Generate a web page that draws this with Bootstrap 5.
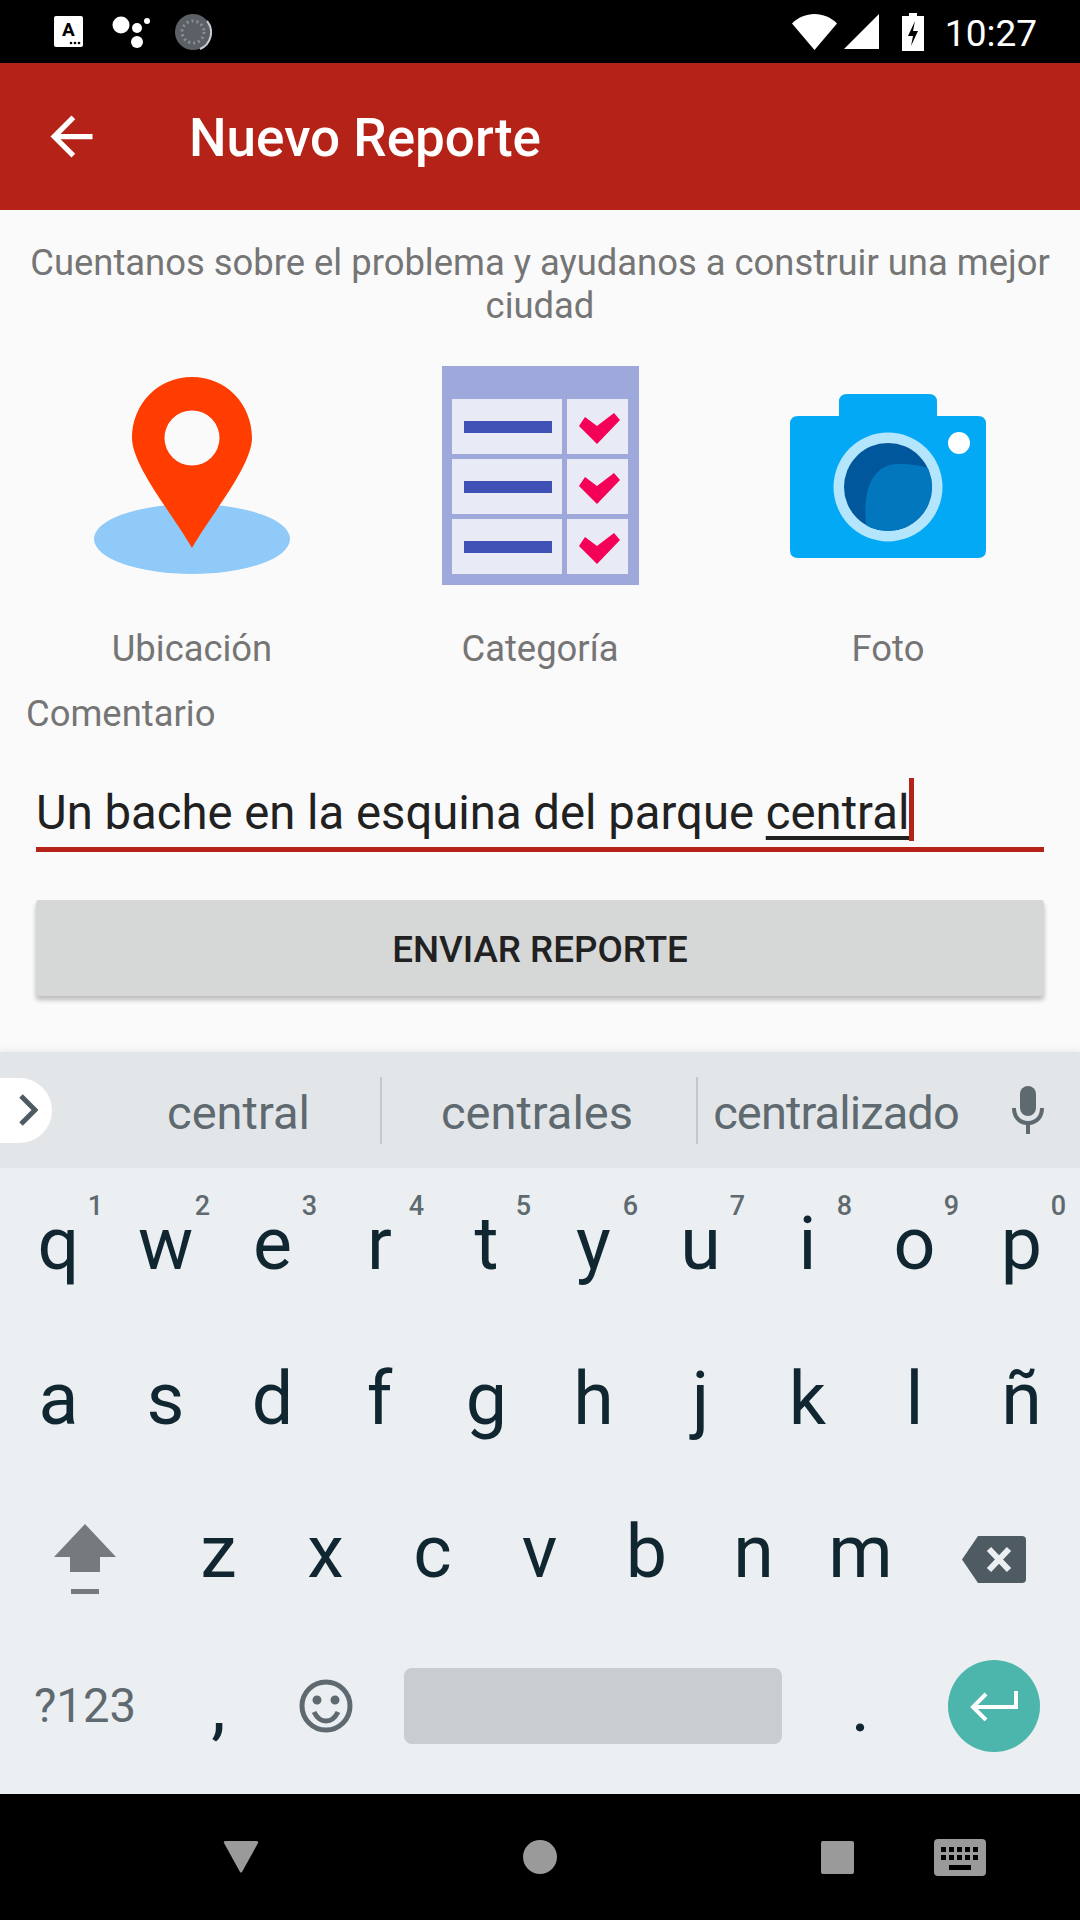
<!DOCTYPE html>
<html lang="es">
<head>
  <meta charset="UTF-8" />
  <meta name="viewport" content="width=device-width, initial-scale=1" />
  <title>Nuevo Reporte</title>
  <link href="https://cdn.jsdelivr.net/npm/bootstrap@5.3.3/dist/css/bootstrap.min.css" rel="stylesheet" />
  <style>
    body { width: 1080px; height: 1920px; overflow: hidden; background: #fafafa; font-family: Roboto, "Liberation Sans", sans-serif; }
    svg { display: block; flex-shrink: 0; }

    .status-bar { height: 63px; background: #000; color: #fff; padding: 0 43px 0 54px; }
    .status-time { font-size: 37px; line-height: 1; margin-left: 21px; padding-top: 3px; }
    .app-bar { height: 147px; background: #b52217; color: #fff; padding-left: 40px; }
    .app-title { font-size: 53px; font-weight: 500; margin: 4px 0 0 86px; line-height: 1; }

    .report-body { height: 842px; background: #fafafa; padding: 0 36px; color: #757575; }
    .report-intro { font-size: 36.400px; line-height: 43px; text-align: center; padding-top: 31px; margin: 0 -18px 0; }
    .report-grid { margin: 0 -18px; }
    .report-icons { margin-top: 39px; height: 220px; }
    .report-label { font-size: 36.400px; line-height: 43px; margin-top: 41px; }
    .comment-label { font-size: 36.400px; line-height: 43px; margin: 22px 0 0 -10px; }
    .comment-box { height: 88px; margin-top: 28.500px; border-bottom: 5px solid #b52217; color: #212121; font-size: 47.250px; line-height: 98px; white-space: nowrap; }
    .comment-word { text-decoration: underline; text-decoration-thickness: 4px; text-underline-offset: 7px; }
    .comment-caret { display: inline-block; width: 5px; height: 63px; background: #b52217; vertical-align: -12.500px; }
    .send-btn { width: 100%; height: 96px; margin-top: 48px; padding-top: 10px; background: #d6d7d7; border: 0; border-radius: 3px; color: #212121; font-size: 36.750px; font-weight: 500; box-shadow: 0 4px 5px rgba(0,0,0,.25); }

    .suggest-strip { height: 116px; background: #e3e6e9; color: #5f6a70; font-size: 47px; box-shadow: 0 -2px 6px rgba(0,0,0,.06); }
    .suggest-tab { width: 52px; height: 65px; background: #fff; border-radius: 0 33px 33px 0; }
    .suggest-word { text-align: center; line-height: 65px; padding-top: 2px; }
    .suggest-word span { position: relative; top: 1px; }
    .suggest-word:nth-child(1) { width: 298px; padding-left: 15px; }
    .suggest-word:nth-child(2) { width: 316px; padding-right: 4px; border-left: 2px solid #c4c8ca; }
    .suggest-word:nth-child(3) { width: 278px; border-left: 2px solid #c4c8ca; letter-spacing: -.9px; }
    .suggest-list { margin-left: 30px; }
    .suggest-mic { margin-left: 36px; }

    .keyboard { height: 626px; background: #eceff1; color: #102732; }
    .kb-row { height: 156.500px; padding: 0 5px; }
    .kb-row:nth-child(1) .kb-key { line-height: 153px; }
    .kb-row:nth-child(3) .kb-key { line-height: 143px; }
    .kb-row:nth-child(4) { padding-bottom: 20px; }
    .kb-row:nth-child(4) .kb-key { line-height: 137px; }
    .kb-key { position: relative; flex: 0 0 107px; text-align: center; font-size: 73.500px; line-height: 148px; }
    .kb-hint { position: absolute; top: 25px; right: 9px; font-size: 27px; line-height: 1; color: #5f6a70; font-weight: 500; }
    .kb-wide { flex: 0 0 160px; }
    .kb-row:nth-child(4) .kb-sym { font-size: 47.250px; color: #5f6a70; line-height: 136px; }
    .kb-space { flex: 0 0 428px; }
    .kb-bar { width: 378px; height: 76px; background: #c8cdd0; border-radius: 8px; }
    .kb-enter { width: 92px; height: 92px; background: #4db6ac; border-radius: 50%; }
    .nav-bar { height: 126px; background: #000; }
  </style>
</head>
<body>
<div class="d-flex flex-column">

  <!-- Status bar -->
  <div class="status-bar d-flex align-items-center">
    <svg width="29" height="31" viewBox="0 0 29 31"><rect width="29" height="31" rx="2" fill="#fff"/><text x="14.500" y="20" font-family="Roboto" font-weight="700" font-size="19" text-anchor="middle" fill="#000">A</text><circle cx="17" cy="27" r="1.300" fill="#000"/><circle cx="21" cy="27" r="1.300" fill="#000"/><circle cx="25" cy="27" r="1.300" fill="#000"/></svg>
    <svg style="margin-left:29px" width="38" height="36" viewBox="0 0 38 36"><circle cx="9" cy="11" r="8.500" fill="#fff"/><circle cx="25" cy="14" r="5" fill="#fff"/><circle cx="25" cy="28" r="6" fill="#fff"/><circle cx="35" cy="7" r="3" fill="#fff"/></svg>
    <svg style="margin-left:24px" width="38" height="38" viewBox="0 0 38 38"><circle cx="19" cy="19" r="18" fill="#5b6066"/><circle cx="19" cy="19" r="11" fill="none" stroke="#8b8f94" stroke-width="3" stroke-dasharray="2 3"/><path d="M33 8a18 18 0 0 1-7 28" fill="none" stroke="#c8ccd0" stroke-width="2"/></svg>
    <div class="flex-grow-1"></div>
    <svg width="45" height="36" viewBox="0 0 45 36"><path d="M22.500 36L0 9.500C6 3.500 14 0 22.500 0S39 3.500 45 9.500z" fill="#fff"/></svg>
    <svg style="margin-left:7px" width="35" height="35" viewBox="0 0 35 35"><path d="M35 0v35H0z" fill="#fff"/></svg>
    <svg style="margin-left:23px" width="22" height="38" viewBox="0 0 22 38"><path d="M7 0h8v3h7v35H0V3h7z" fill="#fff"/><path d="M13 8l-7 15h5l-2 10 7-15h-5z" fill="#000"/></svg>
    <div class="status-time">10:27</div>
  </div>

  <!-- App bar -->
  <div class="app-bar d-flex align-items-center">
    <svg width="63" height="63" viewBox="0 0 24 24" fill="#fff"><path d="M20 11H7.830l5.590-5.590L12 4l-8 8 8 8 1.410-1.410L7.830 13H20v-2z"/></svg>
    <h1 class="app-title">Nuevo Reporte</h1>
  </div>

  <!-- Form -->
  <div class="report-body">
    <p class="report-intro">Cuentanos sobre el problema y ayudanos a construir una mejor ciudad</p>

    <div class="row gx-0 report-grid report-icons">
      <div class="col-4 d-flex justify-content-center">
        <svg width="196" height="220" viewBox="0 0 196 220">
          <ellipse cx="98" cy="173" rx="98" ry="35" fill="#90caf9"/>
          <path fill-rule="evenodd" fill="#ff3d00" d="M98 11C64 11 38 38 38 72C38 100 80 150 98 182C116 150 158 100 158 72C158 38 132 11 98 11ZM98 44.500a27.500 27.500 0 1 1 0 55a27.500 27.500 0 1 1 0-55Z"/>
        </svg>
      </div>
      <div class="col-4 d-flex justify-content-center">
        <svg width="197" height="220" viewBox="0 0 197 220">
          <rect width="197" height="219" fill="#9fa8da"/>
          <g id="checkRow">
            <rect x="10" y="33" width="110" height="55" fill="#e8eaf6"/>
            <rect x="125" y="33" width="61" height="55" fill="#e8eaf6"/>
            <rect x="22" y="55" width="88" height="12" fill="#3f51b5"/>
            <path d="M137 60l6-9 12 9 17-13 6 7-23 24z" fill="#f50057"/>
          </g>
          <use href="#checkRow" y="60"/>
          <use href="#checkRow" y="120"/>
        </svg>
      </div>
      <div class="col-4 d-flex justify-content-center">
        <svg width="196" height="220" viewBox="0 0 196 220">
          <defs><clipPath id="lensClip"><circle cx="98" cy="121" r="44"/></clipPath></defs>
          <path fill="#03a9f4" d="M49 50V36q0-8 8-8h82q8 0 8 8v14h41q8 0 8 8v126q0 8-8 8H8q-8 0-8-8V58q0-8 8-8z"/>
          <circle cx="98" cy="121" r="54.500" fill="#b3e5fc"/>
          <circle cx="98" cy="121" r="44" fill="#01579b"/>
          <path clip-path="url(#lensClip)" fill="#0277bd" d="M78 170C70 130 80 98 108 98C122 98 135 100 145 105V170Z"/>
          <circle cx="169" cy="77" r="11" fill="#fff"/>
        </svg>
      </div>
    </div>

    <div class="row gx-0 report-grid text-center">
      <div class="col-4 report-label">Ubicación</div>
      <div class="col-4 report-label">Categoría</div>
      <div class="col-4 report-label">Foto</div>
    </div>

    <div class="comment-label">Comentario</div>
    <div class="comment-box">Un bache en la esquina del parque <span class="comment-word">central</span><span class="comment-caret"></span></div>
    <button type="button" class="btn send-btn">ENVIAR REPORTE</button>
  </div>

  <!-- Suggestions -->
  <div class="suggest-strip d-flex align-items-center">
    <div class="suggest-tab d-flex align-items-center">
      <svg style="margin-left:18px" width="20" height="32" viewBox="0 0 20 32"><path d="M3 2l14 14L3 30" fill="none" stroke="#4f5b62" stroke-width="5"/></svg>
    </div>
    <div class="suggest-list d-flex">
      <div class="suggest-word"><span>central</span></div>
      <div class="suggest-word"><span>centrales</span></div>
      <div class="suggest-word"><span>centralizado</span></div>
    </div>
    <svg class="suggest-mic" width="36" height="48" viewBox="0 0 36 48" fill="#5f6a70"><rect x="10" y="0" width="16" height="30" rx="8"/><path d="M2 22h4c0 8 5 13 12 13s12-5 12-13h4c0 10-6 16-14 17v9h-4v-9C8 38 2 32 2 22z"/></svg>
  </div>

  <!-- Keyboard -->
  <div class="keyboard">
    <div class="kb-row d-flex">
      <div class="kb-key">q<span class="kb-hint">1</span></div>
      <div class="kb-key">w<span class="kb-hint">2</span></div>
      <div class="kb-key">e<span class="kb-hint">3</span></div>
      <div class="kb-key">r<span class="kb-hint">4</span></div>
      <div class="kb-key">t<span class="kb-hint">5</span></div>
      <div class="kb-key">y<span class="kb-hint">6</span></div>
      <div class="kb-key">u<span class="kb-hint">7</span></div>
      <div class="kb-key">i<span class="kb-hint">8</span></div>
      <div class="kb-key">o<span class="kb-hint">9</span></div>
      <div class="kb-key">p<span class="kb-hint">0</span></div>
    </div>
    <div class="kb-row d-flex">
      <div class="kb-key">a</div><div class="kb-key">s</div><div class="kb-key">d</div><div class="kb-key">f</div><div class="kb-key">g</div>
      <div class="kb-key">h</div><div class="kb-key">j</div><div class="kb-key">k</div><div class="kb-key">l</div><div class="kb-key">ñ</div>
    </div>
    <div class="kb-row d-flex">
      <div class="kb-key kb-wide d-flex align-items-center justify-content-center">
        <svg width="62" height="70" viewBox="0 0 62 70" fill="#757a7d"><path d="M31 0l31 33H46v15H16V33H0z"/><rect x="17" y="65" width="28" height="5"/></svg>
      </div>
      <div class="kb-key">z</div><div class="kb-key">x</div><div class="kb-key">c</div><div class="kb-key">v</div><div class="kb-key">b</div><div class="kb-key">n</div><div class="kb-key">m</div>
      <div class="kb-key kb-wide d-flex align-items-center justify-content-center">
        <svg width="64" height="47" viewBox="0 0 64 47"><path d="M16 0h44q4 0 4 4v39q0 4-4 4H16L0 23.500z" fill="#4f5b62"/><path d="M27 13l20 21M47 13L27 34" stroke="#eceff1" stroke-width="6"/></svg>
      </div>
    </div>
    <div class="kb-row d-flex">
      <div class="kb-key kb-wide kb-sym">?123</div>
      <div class="kb-key">,</div>
      <div class="kb-key d-flex align-items-center justify-content-center">
        <svg width="54" height="54" viewBox="0 0 54 54" fill="none" stroke="#5f6a70" stroke-width="5"><circle cx="27" cy="27" r="24"/><path d="M15 33c3 6 7 9 12 9s9-3 12-9"/><circle cx="18" cy="21" r="2" fill="#5f6a70"/><circle cx="36" cy="21" r="2" fill="#5f6a70"/></svg>
      </div>
      <div class="kb-key kb-space d-flex align-items-center justify-content-center"><div class="kb-bar"></div></div>
      <div class="kb-key">.</div>
      <div class="kb-key kb-wide d-flex align-items-center justify-content-center">
        <div class="kb-enter d-flex align-items-center justify-content-center">
          <svg width="50" height="30" viewBox="0 0 50 30" fill="none" stroke="#fff" stroke-width="4"><path d="M47 0v16H5M17 3L4 16l13 13"/></svg>
        </div>
      </div>
    </div>
  </div>

  <!-- Navigation bar -->
  <div class="nav-bar d-flex align-items-center">
    <svg style="margin-left:223px" width="36" height="32" viewBox="0 0 36 32"><path d="M1 2q-1-2 2-2h30q3 0 2 2L19 31q-1 1-2 0z" fill="#9a9a9a"/></svg>
    <svg style="margin-left:264px" width="34" height="34" viewBox="0 0 34 34"><circle cx="17" cy="17" r="17" fill="#9a9a9a"/></svg>
    <svg style="margin-left:264px" width="33" height="33" viewBox="0 0 33 33"><rect width="33" height="33" rx="2" fill="#9a9a9a"/></svg>
    <svg style="margin-left:80px" width="52" height="37" viewBox="0 0 52 37"><rect width="52" height="37" rx="4" fill="#9a9a9a"/><g fill="#000"><rect x="7" y="8" width="5" height="5"/><rect x="15" y="8" width="5" height="5"/><rect x="23" y="8" width="5" height="5"/><rect x="31" y="8" width="5" height="5"/><rect x="39" y="8" width="5" height="5"/><rect x="7" y="16" width="5" height="5"/><rect x="15" y="16" width="5" height="5"/><rect x="23" y="16" width="5" height="5"/><rect x="31" y="16" width="5" height="5"/><rect x="39" y="16" width="5" height="5"/><rect x="15" y="26" width="22" height="5"/></g></svg>
  </div>

</div>
<script src="https://cdn.jsdelivr.net/npm/bootstrap@5.3.3/dist/js/bootstrap.bundle.min.js"></script>
</body>
</html>
